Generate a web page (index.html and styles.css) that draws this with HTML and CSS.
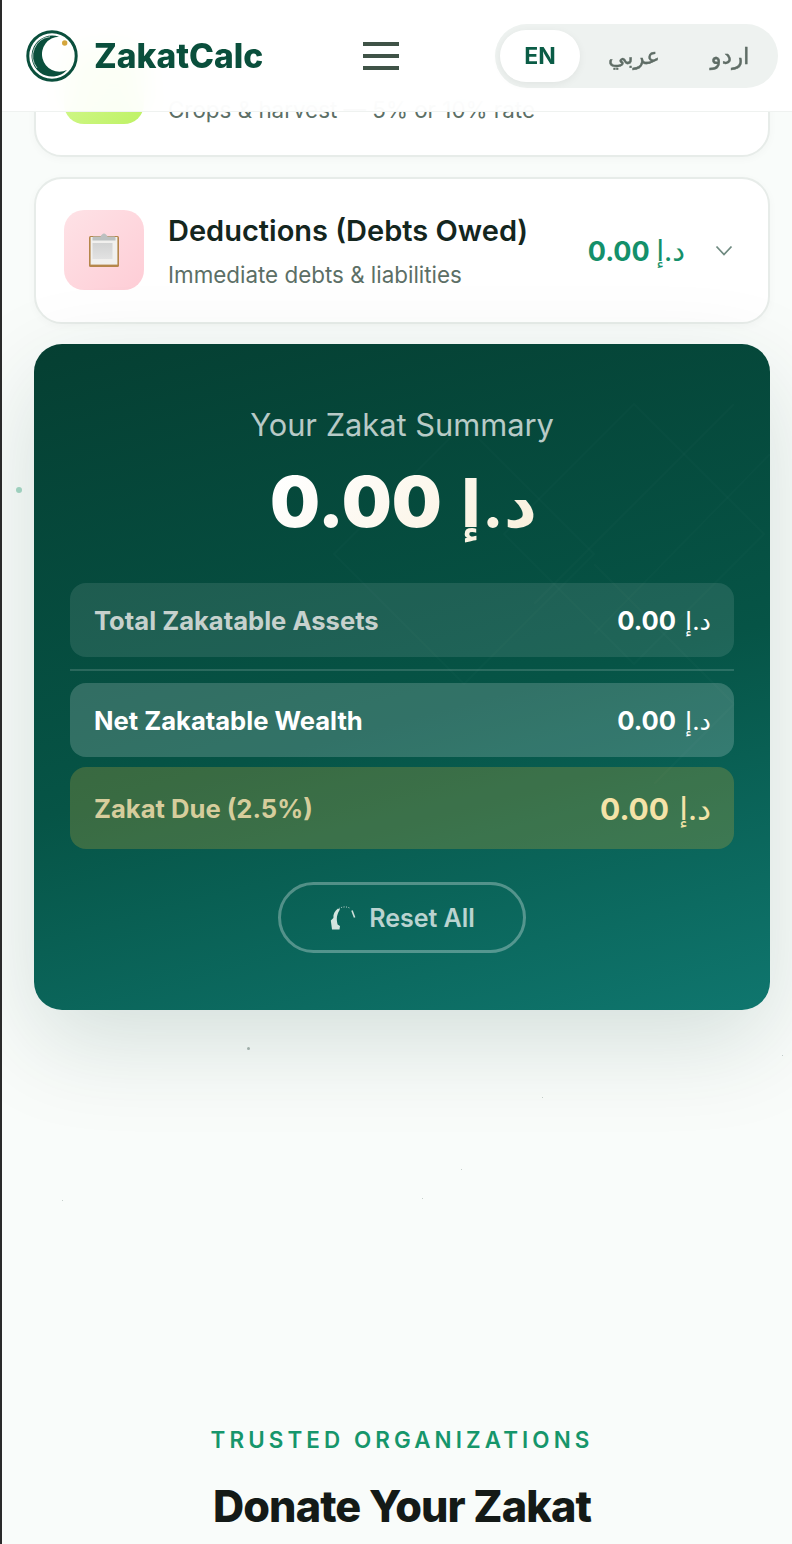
FILE: index.html
```html
<!DOCTYPE html>
<html lang="en">
<head>
<meta charset="utf-8">
<title>ZakatCalc</title>
<link rel="stylesheet" href="styles.css">
</head>
<body>
<div class="page">
  <header class="topbar">
    <a class="brand">
      <svg class="brand-logo" viewBox="0 0 52 52" aria-hidden="true">
        <circle cx="26" cy="26" r="24.2" fill="none" stroke="#0a4f3c" stroke-width="3"/>
        <path d="M33 6.7A20.5 20.5 0 1 0 41 40A17.5 17.5 0 1 1 33 6.7Z" fill="#0a4f3c"/>
        <path d="M24 6.7A19.4 19.4 0 0 0 11 38" fill="none" stroke="#fff" stroke-width=".7"/>
        <circle cx="38.7" cy="13" r="2.7" fill="#d4a63c"/>
      </svg>
      <span class="brand-name">ZakatCalc</span>
    </a>
    <button class="burger" aria-label="Menu"><i></i><i></i><i></i></button>
    <nav class="lang">
      <span class="lang-item lang-active">EN</span>
      <span class="lang-item">عربي</span>
      <span class="lang-item">اردو</span>
    </nav>
  </header>

  <span class="dot dot-a"></span>
  <span class="dot dot-b"></span>
  <span class="dot dot-c"></span>
  <span class="dot dot-d"></span>
  <span class="dot dot-e"></span>
  <span class="dot dot-f"></span>
  <span class="dot dot-g"></span>

  <main class="content">
    <section class="card card-first">
      <div class="card-icon icon-green"></div>
      <div class="card-text">
        <div class="card-title"></div>
        <p class="card-sub">Crops &amp; harvest — 5% or 10% rate</p>
      </div>
    </section>

    <section class="card">
      <div class="card-icon icon-pink">
        <svg class="clip" viewBox="0 0 30 34" aria-hidden="true">
          <defs>
            <linearGradient id="paper" x1="0" y1="0" x2="0" y2="1">
              <stop offset="0" stop-color="#d2d3d3"/>
              <stop offset="1" stop-color="#e2e2e2"/>
            </linearGradient>
          </defs>
          <rect x="0" y="3" width="30" height="31" rx="1.5" fill="#b5864a"/>
          <rect x="1.6" y="4" width="26.8" height="27.6" fill="#f1f0ee"/>
          <rect x="3.5" y="10" width="20" height="16" fill="url(#paper)"/>
          <path d="M3.5 7.5V5C3.5 4 4 3.4 5 3.4h6.5C12.5 2 13.5 .6 15 .6s2.5 1.4 3.5 2.8H25c1 0 1.5.6 1.5 1.6v2.5z" fill="#bcc0c0"/>
        </svg>
      </div>
      <div class="card-text">
        <h3 class="card-title">Deductions (Debts Owed)</h3>
        <p class="card-sub">Immediate debts &amp; liabilities</p>
      </div>
      <span class="card-value">0.00 <span class="cur">د.إ</span></span>
      <svg class="chev" viewBox="0 0 18 11"><path d="M1.5 1.5 9 9.5l7.5-8" fill="none" stroke="#6f8a80" stroke-width="1.8"/></svg>
    </section>

    <section class="summary">
      <svg class="summary-pattern" viewBox="0 0 736 666" aria-hidden="true">
        <g fill="none" stroke="#fff" stroke-opacity=".015" stroke-width="2">
          <path d="M430 80 560 210 430 340 300 210Z"/>
          <path d="M600 60 730 190 600 320 470 190Z"/>
          <path d="M700 60 500 260"/>
          <path d="M736 110 560 290"/>
          <path d="M560 220 700 360 620 440"/>
        </g>
      </svg>
      <h2 class="summary-title">Your Zakat Summary</h2>
      <div class="summary-total">0.00 <span class="cur-big">د.إ</span></div>
      <div class="row row-muted"><span>Total Zakatable Assets</span><b>0.00 <span class="cur">د.إ</span></b></div>
      <hr class="row-rule">
      <div class="row row-net"><span>Net Zakatable Wealth</span><b>0.00 <span class="cur">د.إ</span></b></div>
      <div class="row row-due"><span>Zakat Due (2.5%)</span><b>0.00 <span class="cur">د.إ</span></b></div>
      <button class="reset">
        <svg class="reset-icon" viewBox="0 0 28 28" aria-hidden="true">
          <path d="M10 4.6A11 11 0 0 1 21 4.2" fill="none" stroke="#cfe0da" stroke-width="1" stroke-dasharray="1 1.4"/>
          <path d="M23 6.5 25.6 13.5" fill="none" stroke="#cfe0da" stroke-width="1.6"/>
          <path d="M9 4.4C5.8 7 4 10 4.4 14L1.8 16.5 3 25.5H10.5L11 22 8.6 20.6C8 18 7.5 15 8 12.5 8.5 10 9.6 7 11 5.4Z" fill="#d3e4de"/>
        </svg>
        Reset All
      </button>
    </section>

    <section class="orgs">
      <p class="orgs-eyebrow">TRUSTED ORGANIZATIONS</p>
      <h2 class="orgs-title">Donate Your Zakat</h2>
    </section>
  </main>
</div>
</body>
</html>
```
FILE: styles.css
```css
* { box-sizing: border-box; }
html, body { margin: 0; padding: 0; }
body {
  font-family: Inter, "DejaVu Sans", sans-serif;
  background: #f9fcfa;
  color: #14261e;
}
.page {
  position: relative;
  height: 1544px;
  overflow: hidden;
  border-left: 2px solid #2a2a2a;
  background: #f9fcfa;
}
.topbar {
  position: absolute;
  top: 0; left: 0; right: 0;
  height: 112px;
  z-index: 5;
  display: flex;
  align-items: center;
  padding: 0 14px 0 24px;
  background: rgba(255,255,255,.93);
  backdrop-filter: blur(14px);
  border-bottom: 1px solid #eff2f0;
}
.brand { display: flex; align-items: center; gap: 16px; }
.brand-logo { width: 52px; height: 52px; display: block; }
.brand-name { font-size: 33.6px; font-weight: 800; color: #0a4f3c; }
.burger {
  margin-left: 100px;
  width: 36px; height: 28px;
  padding: 0; border: 0; background: none;
  display: flex; flex-direction: column; justify-content: space-between;
}
.burger i { display: block; height: 4px; background: #3f5347; }
.lang {
  margin-left: auto;
  width: 283px; height: 64px;
  padding: 6px 5px;
  border-radius: 32px;
  background: #eef2f0;
  display: flex; align-items: stretch;
}
.lang-item {
  flex: 0 0 80px;
  display: flex; align-items: center; justify-content: center;
  margin-right: 16px;
  font-size: 23px; font-weight: 400; color: #5f6d66;
  -webkit-text-stroke: .4px #5f6d66;
  border-radius: 26px;
}
.lang-active {
  background: #fff; color: #0a5c46; font-weight: 700;
  -webkit-text-stroke: 0;
  box-shadow: 0 2px 8px rgba(0,0,0,.06);
  margin-right: 14px;
}
.content { padding: 11px 22px 0 32px; }
.card {
  height: 147px;
  margin-bottom: 20px;
  padding: 0 35px 1px 28px;
  display: flex; align-items: center;
  background: #fff;
  border: 2px solid #e7ece9;
  border-radius: 28px;
  box-shadow: 0 2px 8px rgba(0,0,0,.03);
}
.card-first { height: 146px; padding-bottom: 0; }
.card-icon {
  flex: 0 0 80px; height: 80px;
  border-radius: 20px;
  display: flex; align-items: center; justify-content: center;
}
.icon-green { background: linear-gradient(135deg, #d9f99d, #bef264); }
.icon-pink { background: linear-gradient(135deg, #fee2e6, #fecdd6); }
.clip { width: 30px; height: 34px; display: block; }
.card-text { flex: 1; margin-left: 24px; padding-top: 2px; }
.card-title { margin: 0 0 10px; min-height: 38px; font-size: 29px; line-height: 38px; font-weight: 600; color: #14261e; }
.card-first .card-title { margin-bottom: 11px; }
.card-sub { margin: 0; font-size: 22.4px; line-height: 30px; color: #5c6f66; white-space: nowrap; }
.card-value { font-size: 27px; font-weight: 700; color: #14906a; white-space: nowrap; }
.cur { font-weight: 400; }
.card-value .cur { font-size: 28.5px; }
.chev { width: 18px; height: 11px; margin-left: 30px; display: block; }
.summary {
  position: relative;
  height: 666px;
  padding: 60px 36px 0;
  border-radius: 28px;
  background: linear-gradient(165deg, #053f32 0%, #065446 55%, #0f766e 100%);
  box-shadow: 0 32px 96px rgba(4,60,48,.15);
  color: #fff;
  text-align: center;
}
.summary-pattern { position: absolute; inset: 0; width: 100%; height: 100%; pointer-events: none; }
.summary-title {
  position: relative;
  margin: 0; font-size: 30.8px; line-height: 42px; font-weight: 400;
  color: rgba(255,255,255,.72);
}
.summary-total {
  position: relative;
  margin: 12px 0 35px;
  padding-left: 3px;
  font-size: 70.4px; line-height: 88px; font-weight: 900;
  background: linear-gradient(135deg, #ffffff 30%, #f5e6c4 100%);
  -webkit-background-clip: text; background-clip: text;
  color: transparent;
}
.cur-big { font-size: 65px; font-weight: 700; margin-left: 4px; }
.row {
  position: relative;
  height: 74px;
  padding: 0 23px 0 24px;
  border-radius: 16px;
  display: flex; align-items: center; justify-content: space-between;
  font-size: 25.6px; font-weight: 700;
}
.row b { font-weight: 700; color: #fff; }
.row b .cur { font-weight: 400; margin-left: 3px; }
.row-muted { background: rgba(255,255,255,.1); color: #c6d1cd; }
.row-rule { position: relative; height: 2px; margin: 12px 0; border: 0; background: rgba(255,255,255,.15); }
.row-net { background: rgba(255,255,255,.18); color: #fff; margin-bottom: 10px; }
.row-due { height: 82px; background: rgba(212,175,55,.25); color: #d6cd9c; }
.row-due b { font-size: 30px; color: #f4e3a8; }
.row-due b .cur { font-size: 31.5px; }
.reset {
  position: relative;
  margin-top: 33px;
  width: 248px; height: 71px;
  display: inline-flex; align-items: center; justify-content: center; gap: 12px;
  background: none;
  border: 3px solid rgba(255,255,255,.3);
  border-radius: 36px;
  font: 600 25px Inter, sans-serif;
  color: rgba(255,255,255,.72);
}
.reset-icon { width: 28px; height: 28px; display: block; }
.orgs { text-align: center; margin-top: 415px; }
.orgs-eyebrow {
  margin: 0;
  font-size: 22.4px; line-height: 30px; font-weight: 600;
  letter-spacing: 4.1px; color: #16966b;
}
.orgs-title {
  margin: 26px 0 0;
  font-size: 43.2px; line-height: 50px; font-weight: 800; letter-spacing: -.9px; color: #141a17;
}
.dot { position: absolute; border-radius: 50%; background: #b5c0bc; width: 1px; height: 1px; }
.dot-a { left: 14px; top: 487px; width: 6px; height: 6px; background: #a7d8c6; }
.dot-b { left: 245px; top: 1047px; width: 3px; height: 3px; background: #a9b6b1; }
.dot-c { left: 780px; top: 1055px; }
.dot-d { left: 540px; top: 1097px; }
.dot-e { left: 459px; top: 1169px; }
.dot-f { left: 60px; top: 1200px; }
.dot-g { left: 420px; top: 1198px; }
```
